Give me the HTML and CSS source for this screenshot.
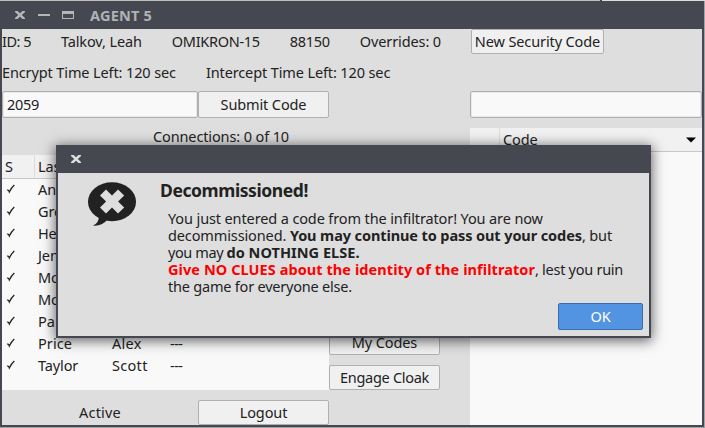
FILE: index.html
```html
<!DOCTYPE html>
<html lang="en">
<head>
<meta charset="utf-8">
<title>AGENT 5</title>
<link rel="stylesheet" href="styles.css">
</head>
<body>
<div class="desktop">
  <main class="window">
    <header class="titlebar">
      <svg class="controls" width="62" height="12" viewBox="0 0 62 12">
        <path d="M1 2h2.600L6 4.200 8.400 2H11v1L7.800 6 11 9v1H8.400L6 7.800 3.600 10H1V9l3.200-3L1 3z"/>
        <path d="M24 5h12v2H24z"/>
        <path fill-rule="evenodd" d="M48 2h12v8H48zM49 5v4h10V5z"/>
      </svg>
      <span class="title">AGENT 5</span>
    </header>
    <div class="content">
      <div class="info">
        <span class="id">ID: 5</span><span>Talkov, Leah</span><span class="team">OMIKRON-15</span><span class="team">88150</span><span>Overrides: 0</span>
      </div>
      <button class="btn new-code">New Security Code</button>
      <div class="info timers"><span>Encrypt Time Left: 120 sec</span><span>Intercept Time Left: 120 sec</span></div>
      <div class="entry code-entry">2059</div>
      <button class="btn">Submit Code</button>
      <div class="entry note-entry"></div>
      <div class="connections">Connections: 0 of 10</div>
      <div class="list agents">
        <div class="row head"><span>S</span><span>Last</span></div>
        <div class="rows">
          <div class="row"><svg class="check" viewBox="0 0 10 10"><path d="M1 6.300Q2.500 5.500 3.300 8 5.500 3.500 8.300 1"/></svg><span>An</span></div>
          <div class="row"><svg class="check" viewBox="0 0 10 10"><path d="M1 6.300Q2.500 5.500 3.300 8 5.500 3.500 8.300 1"/></svg><span>Gre</span></div>
          <div class="row"><svg class="check" viewBox="0 0 10 10"><path d="M1 6.300Q2.500 5.500 3.300 8 5.500 3.500 8.300 1"/></svg><span>He</span></div>
          <div class="row"><svg class="check" viewBox="0 0 10 10"><path d="M1 6.300Q2.500 5.500 3.300 8 5.500 3.500 8.300 1"/></svg><span>Jen</span></div>
          <div class="row"><svg class="check" viewBox="0 0 10 10"><path d="M1 6.300Q2.500 5.500 3.300 8 5.500 3.500 8.300 1"/></svg><span>Mo</span></div>
          <div class="row"><svg class="check" viewBox="0 0 10 10"><path d="M1 6.300Q2.500 5.500 3.300 8 5.500 3.500 8.300 1"/></svg><span>Mo</span></div>
          <div class="row"><svg class="check" viewBox="0 0 10 10"><path d="M1 6.300Q2.500 5.500 3.300 8 5.500 3.500 8.300 1"/></svg><span>Pa</span></div>
          <div class="row"><svg class="check" viewBox="0 0 10 10"><path d="M1 6.300Q2.500 5.500 3.300 8 5.500 3.500 8.300 1"/></svg><span class="loose">Price</span><span class="wide">Alex</span><span class="dash">---</span></div>
          <div class="row"><svg class="check" viewBox="0 0 10 10"><path d="M1 6.300Q2.500 5.500 3.300 8 5.500 3.500 8.300 1"/></svg><span>Taylor</span><span class="wide">Scott</span><span class="dash">---</span></div>
        </div>
      </div>
      <div class="actions">
        <button class="btn">My Codes</button>
        <button class="btn cloak">Engage Cloak</button>
      </div>
      <div class="list codes">
        <div class="row head"><span></span><span>Code</span><svg width="10" height="6" viewBox="0 0 10 6"><path d="M0 .5h10L5 5.500z"/></svg></div>
      </div>
      <div class="status">Active</div>
      <button class="btn logout">Logout</button>
    </div>
  </main>

  <section class="dialog">
    <header class="titlebar">
      <svg class="controls" width="12" height="12" viewBox="0 0 12 12"><path d="M1 2h2.600L6 4.200 8.400 2H11v1L7.800 6 11 9v1H8.400L6 7.800 3.600 10H1V9l3.200-3L1 3z"/></svg>
    </header>
    <div class="dialog-body">
      <svg class="bubble" width="48" height="45" viewBox="0 0 48 45">
        <ellipse cx="24" cy="19.700" rx="24" ry="19.500"/>
        <path d="M11 34Q11 41 5 43.600 14 44.500 20 37z"/>
        <path class="cross" d="M12 13.500l6-6 6 6 6-6 6.200 6-6.100 6 6.100 6-6.200 6-6-6-6 6-6-6 6.100-6z"/>
      </svg>
      <div class="message">
        <h1>Decommissioned!</h1>
        <p>You just entered a code from the infiltrator! You are now<br>
        decommissioned. <b>You may continue to pass out your codes</b>, but<br>
        <span class="may">you may </span><b class="nothing">do NOTHING ELSE.</b><br>
        <b class="warning">Give NO CLUES about the identity of the infiltrator</b><span class="lest">, lest you ruin</span><br>
        <span class="game">the game for everyone else.</span></p>
      </div>
      <button class="btn ok">OK</button>
    </div>
  </section>
</div>
</body>
</html>
```
FILE: styles.css
```css
* { box-sizing: border-box; }

body {
  margin: 0;
  font: 14.5px/17px "Noto Sans", sans-serif;
  letter-spacing: -0.12px;
  color: #222;
}

.desktop {
  position: relative;
  width: 705px;
  height: 428px;
  padding: 1px 1px 1px 0;
  overflow: hidden;
  background: linear-gradient(to right, #bfc0bc 600px, #444 600px, #444 602px, #dededc 602px) 0 0 / 100% 1px no-repeat, #a0a3a5;
}

.window {
  width: 704px;
  height: 426px;
  background: #dedede;
  border: solid #454850;
  border-width: 0 2px 2px;
}

.titlebar {
  display: flex;
  align-items: center;
  height: 28px;
  padding-left: 12px;
  background: #454850;
  color: #b1b2b5;
  fill: #b5b6b8;
}

.title {
  margin-left: 14px;
  font-weight: 700;
  letter-spacing: 0.2px;
}

.content {
  display: grid;
  grid-template-columns: 196px 131px 111px 30px 232px;
  grid-template-rows: 25px 37px 27px 37px 235px 35px;
}

.info {
  grid-column: 1 / 5;
  display: flex;
  align-items: center;
  gap: 30px;
  white-space: nowrap;
}

.timers { grid-column: 1 / 6; }
.id { letter-spacing: -0.5px; }
.team { letter-spacing: -0.3px; }

.btn {
  padding: 0;
  font: inherit;
  letter-spacing: inherit;
  color: inherit;
  background: #f0f0f0;
  border: 1px solid #b0b0b0;
  border-radius: 2px;
}

.new-code {
  justify-self: start;
  width: 133px;
  margin-left: 1px;
}

.entry {
  padding: 4px;
  background: #f9f9f9;
  border: 1px solid #b0b0b0;
  border-radius: 2px;
  box-shadow: inset 0 0 0 1px #e8e8e8;
}

.code-entry { letter-spacing: -0.3px; }
.note-entry { grid-column: 5; }

.connections {
  grid-column: 1 / 4;
  align-self: center;
  text-align: center;
}

.list { background: #f9f9f9; }

.agents {
  grid-column: 1 / 3;
  grid-row: 5;
}

.rows { margin-top: -1px; }

.row {
  display: grid;
  grid-template-columns: 36px 74px 58px 1fr;
  align-items: center;
  height: 22px;
}

.head {
  height: 24px;
  background: linear-gradient(to right, transparent 32px, #dcdcdc 32px, #dcdcdc 33px, transparent 33px) #f1f1f1;
  border-bottom: 1px solid #c8c8c8;
}

.head span:first-child { padding-left: 3px; }

.check {
  width: 10px;
  height: 10px;
  margin-left: 4px;
  fill: none;
  stroke: #222;
  stroke-width: 1.3;
}

.loose { letter-spacing: 0.07px; }
.wide { letter-spacing: 0.3px; }
.dash { letter-spacing: -0.5px; }

.actions {
  grid-column: 3;
  grid-row: 5;
  display: flex;
  flex-direction: column;
  justify-content: flex-end;
  gap: 10px;
}

.actions .btn { height: 25px; }
.cloak { letter-spacing: -0.29px; }

.codes {
  grid-column: 5;
  grid-row: 4 / 7;
  margin-top: 10px;
}

.codes .row { grid-template-columns: 33px 1fr 16px; }
.codes .head {
  background: linear-gradient(to right, transparent 29px, #dcdcdc 29px, #dcdcdc 30px, transparent 30px) #f1f1f1;
}

.status {
  grid-column: 1;
  grid-row: 6;
  align-self: end;
  height: 25px;
  line-height: 25px;
  text-align: center;
  letter-spacing: 0.2px;
}

.logout {
  grid-column: 2;
  grid-row: 6;
  margin-top: 10px;
}

.dialog {
  position: absolute;
  left: 56px;
  top: 145px;
  width: 595px;
  height: 193px;
  background: #dedede;
  border: solid #454850;
  border-width: 0 2px 2px;
  box-shadow: 0 2px 12px 1px rgba(0, 0, 0, 0.6);
}

.dialog .titlebar { fill: #dedede; }

.dialog-body {
  display: grid;
  grid-template-columns: 48px 1fr;
  grid-template-rows: 121px 27px;
  column-gap: 24px;
  padding: 9px 6px 6px 30px;
}

.bubble { fill: #222; }
.cross { fill: #dedede; }

h1 {
  margin: 0 0 11px;
  font-size: 17.5px;
  line-height: 17px;
  letter-spacing: -0.41px;
}

p {
  margin: 0 0 0 8px;
  white-space: nowrap;
}

b { letter-spacing: -0.1px; }
.may { letter-spacing: -0.41px; }
.nothing { letter-spacing: 0.04px; }
.lest { letter-spacing: -0.27px; }
.game { letter-spacing: -0.21px; }

.warning {
  color: #f00;
  letter-spacing: 0.07px;
}

.ok {
  grid-column: 2;
  justify-self: end;
  width: 85px;
  height: 27px;
  color: #fff;
  background: #5294e2;
  border-color: #3a6cb0;
}
```
